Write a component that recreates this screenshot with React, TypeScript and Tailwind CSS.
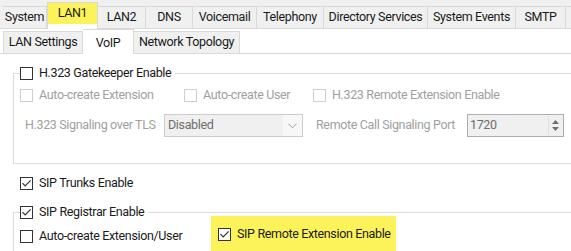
import React from "react";

const Box = ({ checked = false, disabled = false }: { checked?: boolean; disabled?: boolean }) => (
  <span
    className={`inline-flex w-[13px] h-[13px] shrink-0 items-center justify-center border bg-white ${
      disabled ? "border-[#cfcfcf]" : "border-[#333333]"
    }`}
  >
    {checked && (
      <svg width="11" height="11" viewBox="0 0 11 11">
        <path d="M1.5 5.2 L4.2 8 L9.6 2.4" stroke="#333333" strokeWidth="1.2" fill="none" />
      </svg>
    )}
  </span>
);

const Opt = ({
  label,
  checked = false,
  disabled = false,
  className = "",
}: {
  label: string;
  checked?: boolean;
  disabled?: boolean;
  className?: string;
}) => (
  <div className={`flex h-[16px] items-center gap-[6px] ${className}`}>
    <Box checked={checked} disabled={disabled} />
    <span className={`whitespace-nowrap ${disabled ? "text-[#a0a0a0]" : "text-[#1a1a1a]"}`}>{label}</span>
  </div>
);

const topTabs = [
  { t: "System", w: "w-[44px]" },
  { t: "LAN1", w: "w-[51px]", sel: true },
  { t: "LAN2", w: "w-[48px]" },
  { t: "DNS", w: "w-[47px]" },
  { t: "Voicemail", w: "w-[64px]" },
  { t: "Telephony", w: "w-[67px]" },
  { t: "Directory Services", w: "w-[104px]" },
  { t: "System Events", w: "w-[88px]" },
  { t: "SMTP", w: "w-[50px]" },
  { t: "", w: "w-[40px]" },
];

export default function App() {
  return (
    <div
      className="w-[571px] h-[251px] overflow-hidden bg-white text-[12.5px] leading-none tracking-[-0.35px]"
      style={{ fontFamily: 'Roboto, "Noto Sans", sans-serif' }}
    >
      {/* top tab row */}
      <div className="flex h-[29px] items-end border-b border-[#d9d9d9] bg-[#f0f0f0] pl-[3px]">
        {topTabs.map((tab, i) =>
          tab.sel ? (
            <div
              key={i}
              className={`${tab.w} -mb-px flex h-[27px] shrink-0 flex-col border-x border-t border-[#d9d9d9] bg-white`}
            >
              <div className="flex h-[21px] items-center justify-center bg-[#fcf35a] text-[#1a1a1a]">{tab.t}</div>
            </div>
          ) : (
            <div
              key={i}
              className={`${tab.w} flex h-[22px] shrink-0 items-center justify-center border-t border-r border-[#d9d9d9] bg-[#f0f0f0] text-[#1a1a1a] whitespace-nowrap`}
            >
              {tab.t}
            </div>
          )
        )}
      </div>

      {/* second tab row */}
      <div className="flex h-[25px] items-end border-b border-[#d9d9d9] bg-white pl-[3px]">
        <div className="flex h-[22px] w-[80px] shrink-0 items-center justify-center border-x border-t border-[#d9d9d9] bg-[#f0f0f0] text-[#1a1a1a]">
          LAN Settings
        </div>
        <div className="-mb-px flex h-[25px] w-[51px] shrink-0 items-start justify-center border-r border-t border-[#d9d9d9] bg-white pt-[7px] text-[#1a1a1a]">
          VoIP
        </div>
        <div className="flex h-[22px] w-[106px] shrink-0 items-center justify-center border-r border-t border-[#d9d9d9] bg-[#f0f0f0] text-[#1a1a1a]">
          Network Topology
        </div>
      </div>

      {/* content */}
      <div className="flex flex-col pl-[13px]">
        <fieldset className="mt-[11px] mr-[-20px] border border-[#dcdcdc] pb-[26px]">
          <legend className="ml-[6px] flex h-[16px] items-center bg-white pr-[4px]">
            <Opt label="H.323 Gatekeeper Enable" />
          </legend>
          <div className="mt-[6px] flex pl-[6px]">
            <Opt label="Auto-create Extension" disabled className="w-[164px]" />
            <Opt label="Auto-create User" disabled className="w-[129px]" />
            <Opt label="H.323 Remote Extension Enable" disabled />
          </div>
          <div className="mt-[11px] flex items-center pl-[11px]">
            <span className="w-[139px] text-[#a0a0a0] whitespace-nowrap">H.323 Signaling over TLS</span>
            <div className="flex h-[23px] w-[139px] items-center border border-[#cccccc] bg-[#f0f0f0]">
              <span className="flex-1 pl-[3px] text-[#6d6d6d]">Disabled</span>
              <div className="flex h-full w-[19px] items-center justify-center bg-[#f7f7f7]">
                <svg width="9" height="6" viewBox="0 0 9 6">
                  <path d="M0.5 0.8 L4.5 4.8 L8.5 0.8" stroke="#9a9a9a" strokeWidth="1" fill="none" />
                </svg>
              </div>
            </div>
            <span className="ml-[13px] w-[151px] text-[#a0a0a0] whitespace-nowrap">Remote Call Signaling Port</span>
            <div className="flex h-[23px] w-[97px] items-center border border-[#adadad] bg-[#f0f0f0]">
              <span className="flex-1 pl-[2px] text-[#6d6d6d]">1720</span>
              <div className="mr-[2px] flex h-[19px] w-[13px] flex-col items-center justify-center gap-[3px] border-l border-[#e0e0e0]">
                <svg width="7" height="4" viewBox="0 0 7 4">
                  <path d="M0 4 L3.5 0 L7 4 Z" fill="#707070" />
                </svg>
                <svg width="7" height="4" viewBox="0 0 7 4">
                  <path d="M0 0 L3.5 4 L7 0 Z" fill="#707070" />
                </svg>
              </div>
            </div>
          </div>
        </fieldset>

        <Opt label="SIP Trunks Enable" checked className="mt-[11px] ml-[7px]" />

        <fieldset className="mt-[13px] mr-[-20px] h-[80px] border border-[#dcdcdc]">
          <legend className="ml-[6px] flex h-[16px] items-center bg-white pr-[4px]">
            <Opt label="SIP Registrar Enable" checked />
          </legend>
          <div className="-mt-[4px] flex items-start pl-[6px]">
            <Opt label="Auto-create Extension/User" className="mt-[12px] w-[191px]" />
            <div className="h-[40px] w-[185px] bg-[#fcf35a] pl-[7px] pt-[10px]">
              <Opt label="SIP Remote Extension Enable" checked />
            </div>
          </div>
        </fieldset>
      </div>
    </div>
  );
}
